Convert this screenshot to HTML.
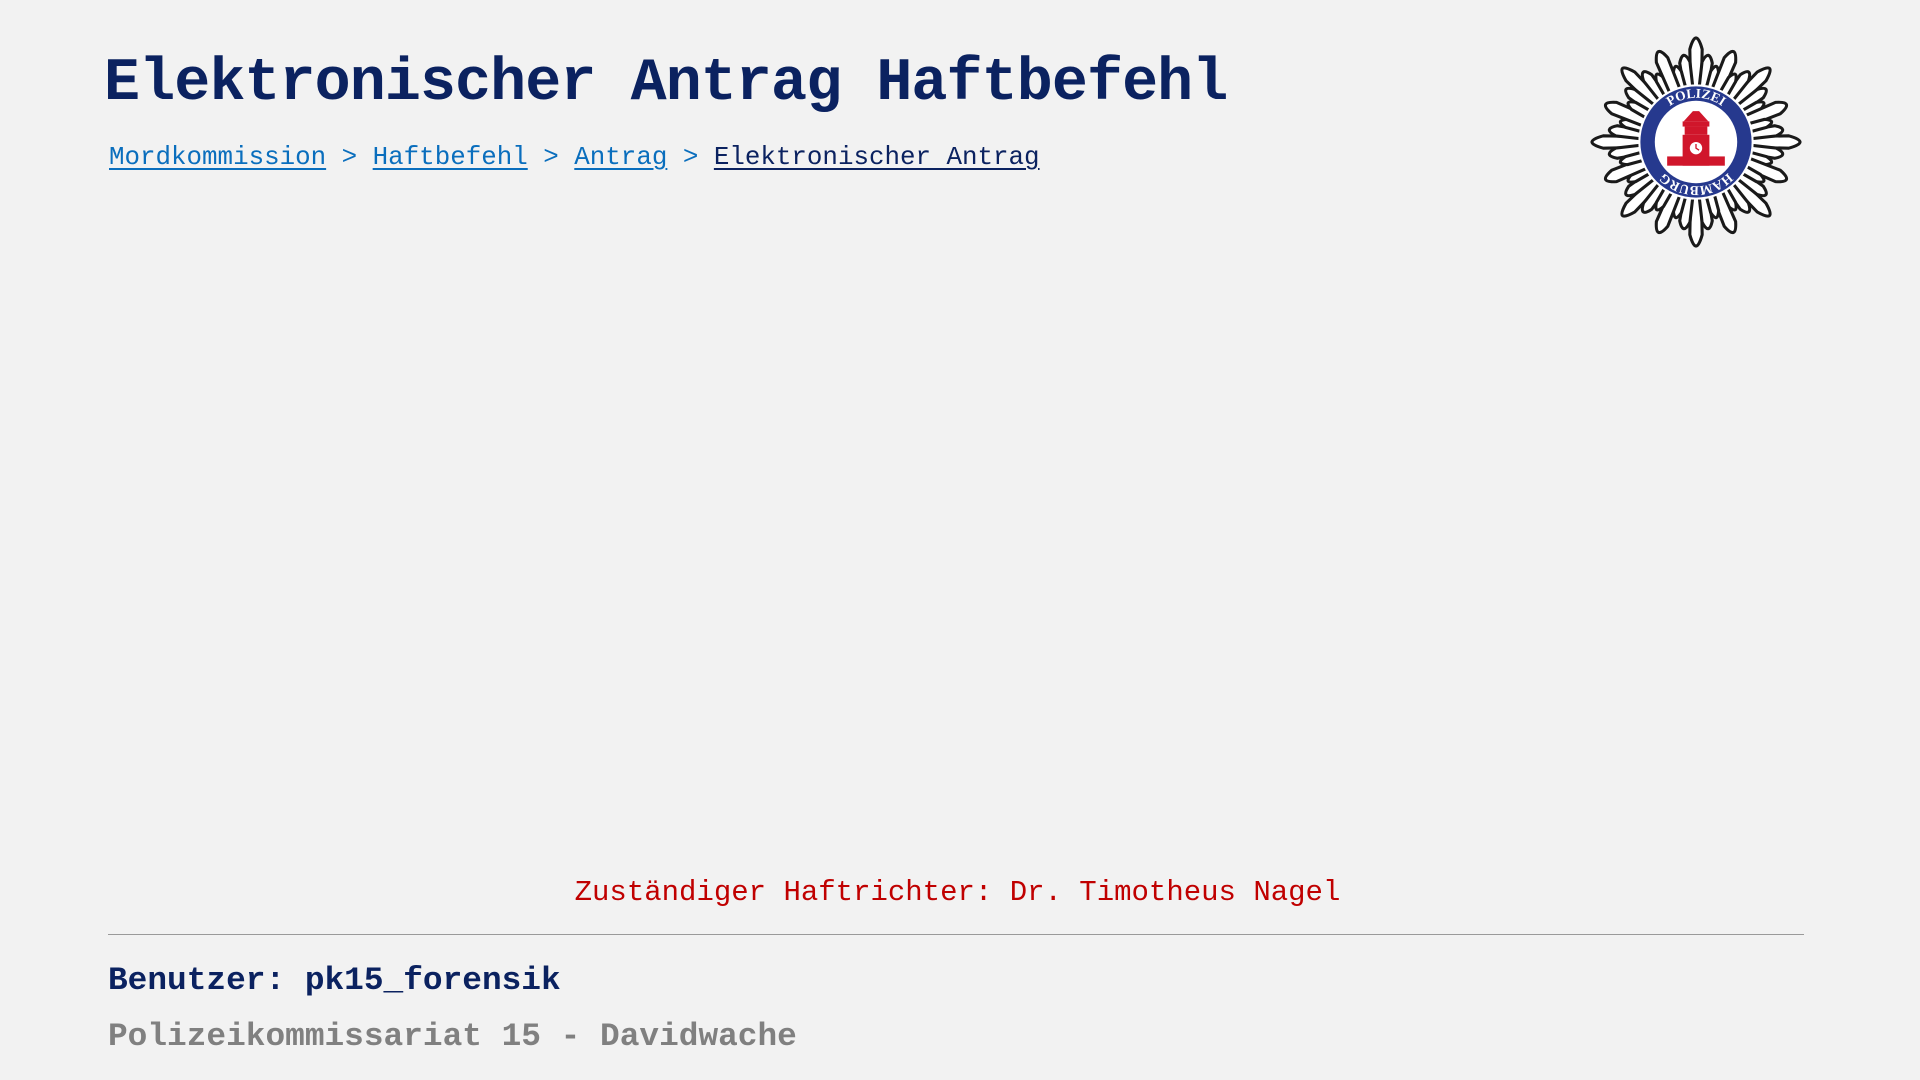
<!DOCTYPE html>
<html><head><meta charset="utf-8"><style>
body{margin:0;width:1920px;height:1080px;background:#f2f2f2;font-family:"Liberation Mono","DejaVu Sans Mono",monospace;position:relative;overflow:hidden}
.t{position:absolute;white-space:nowrap}
h1{position:absolute;left:104px;top:44px;margin:0;font-size:60px;letter-spacing:-0.9px;font-weight:bold;color:#0b2260;line-height:80px;white-space:nowrap}
.bc{left:109px;top:139px;font-size:25.85px;line-height:36px;color:#0a6ebd}
.bc a{color:#0a6ebd;text-decoration:underline;text-underline-offset:4px}
.bc a.cur{color:#0b2260}
.red{left:0;width:1915px;text-align:center;top:875px;font-size:29px;line-height:36px;color:#c00000}
.line{position:absolute;left:108px;width:1696px;top:934px;height:1px;background:#9a9a9a}
.u{left:108px;top:961px;font-size:32.8px;font-weight:bold;color:#0b2260;line-height:40px}
.p{left:108px;top:1017px;font-size:32.8px;font-weight:bold;color:#808080;line-height:40px}
</style></head><body>
<h1>Elektronischer Antrag Haftbefehl</h1>
<div class="t bc"><a>Mordkommission</a> &gt; <a>Haftbefehl</a> &gt; <a>Antrag</a> &gt; <a class="cur">Elektronischer Antrag</a></div>
<svg style="position:absolute;left:1582px;top:28px" width="228" height="228" viewBox="-114 -114 228 228">
<g transform="scale(1.03)">
<g fill="#fff" stroke="#1a1a1a" stroke-width="3">
<g id="rays">
<path d="M-5,-40 L-6,-90 Q0,-112 6,-90 L5,-40Z" transform="rotate(0)"/>
<path d="M-4,-40 L-5,-78 Q0,-92 5,-78 L4,-40Z" transform="rotate(8)"/>
<path d="M-4,-40 L-5,-78 Q0,-92 5,-78 L4,-40Z" transform="rotate(-8)"/>
<path d="M-4,-40 L-4,-70 Q0,-82 4,-70 L4,-40Z" transform="rotate(15)"/>
<path d="M-4,-40 L-4,-70 Q0,-82 4,-70 L4,-40Z" transform="rotate(-15)"/>
<path d="M-5,-40 L-6,-86 Q0,-104 6,-86 L5,-40Z" transform="rotate(22.5)"/>
</g>
<use href="#rays" transform="rotate(45)"/>
<use href="#rays" transform="rotate(90)"/>
<use href="#rays" transform="rotate(135)"/>
<use href="#rays" transform="rotate(180)"/>
<use href="#rays" transform="rotate(225)"/>
<use href="#rays" transform="rotate(270)"/>
<use href="#rays" transform="rotate(315)"/>
</g>
<circle r="56" fill="#fff"/>
<circle r="54" fill="#26398e"/>
<circle r="40" fill="#fff"/>
<path id="ta" d="M-43,0 A43,43 0 0 1 43,0" fill="none"/>
<path id="tb" d="M43,0 A43,43 0 0 1 -43,0" fill="none"/>
<text font-family="Liberation Serif,serif" font-size="13" fill="#fff" font-weight="bold"><textPath href="#ta" startOffset="50%" text-anchor="middle">POLIZEI</textPath></text>
<text font-family="Liberation Serif,serif" font-size="13" fill="#fff" font-weight="bold"><textPath href="#tb" startOffset="50%" text-anchor="middle">HAMBURG</textPath></text>
<g fill="#d0162b">
<path d="M-3,-30 L3,-30 L12,-20 L-12,-20Z"/>
<rect x="-13" y="-20" width="26" height="5"/>
<rect x="-11" y="-15" width="22" height="8"/>
<rect x="-13" y="-7" width="26" height="30"/>
<rect x="-28" y="14" width="56" height="9"/>
</g>
<circle cx="0" cy="6" r="6" fill="#fff"/>
<path d="M0,2 L0,6 L3,8" stroke="#d0162b" stroke-width="1.3" fill="none"/>
</g>
</svg>
<div class="t red">Zuständiger Haftrichter: Dr. Timotheus Nagel</div>
<div class="line"></div>
<div class="t u">Benutzer: pk15_forensik</div>
<div class="t p">Polizeikommissariat 15 - Davidwache</div>
</body></html>
